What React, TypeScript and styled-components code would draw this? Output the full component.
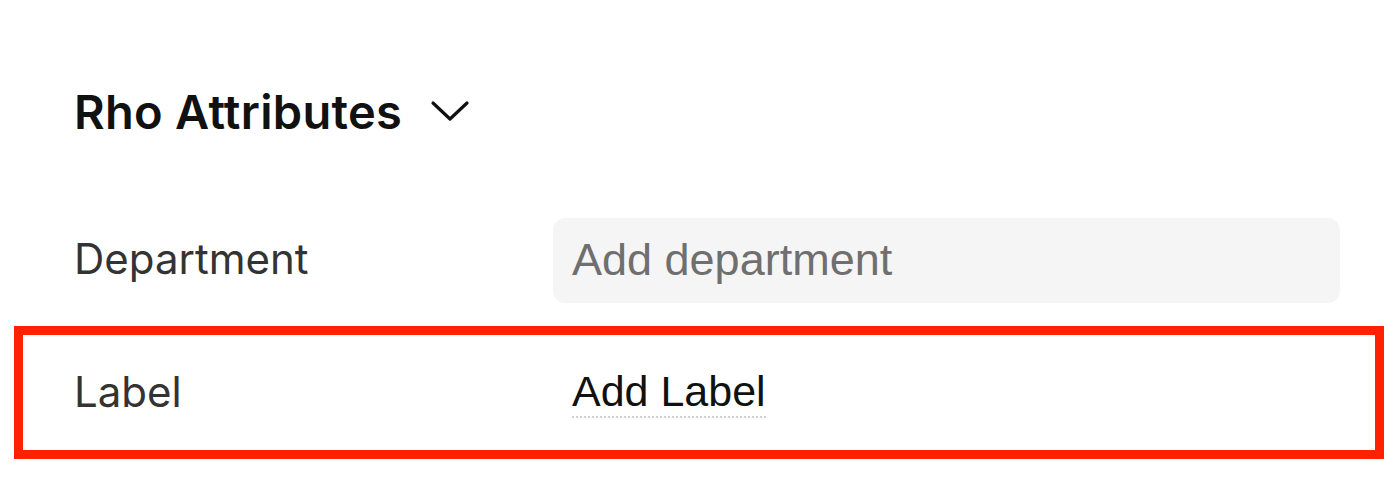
import React from "react";
import styled, { createGlobalStyle } from "styled-components";

const Global = createGlobalStyle`
  html, body { margin: 0; padding: 0; background: #ffffff; }
  body { font-family: Inter, "Noto Sans", sans-serif; color: #111; }
`;

const Page = styled.div`
  width: 1400px;
  height: 479px;
  box-sizing: border-box;
  padding: 83px 0 0 14px;
  display: flex;
  flex-direction: column;
  overflow: hidden;
`;

const Header = styled.div`
  display: flex;
  align-items: center;
  gap: 28px;
  padding-left: 60px;
  height: 56px;
  margin-bottom: 77px;
`;

const Title = styled.h2`
  margin: 0;
  font-family: Inter, sans-serif;
  font-weight: 600;
  font-size: 47px;
  letter-spacing: 0.3px;
  color: #111;
`;

const Chevron = styled.svg`
  width: 40px;
  height: 24px;
`;

const Row = styled.div<{ $highlight?: boolean }>`
  display: grid;
  grid-template-columns: 479px 787px;
  align-items: center;
  box-sizing: border-box;
  width: 1370px;
  padding-left: ${(p) => (p.$highlight ? 51 : 60)}px;
  height: ${(p) => (p.$highlight ? 133 : 88)}px;
  margin-bottom: ${(p) => (p.$highlight ? 0 : 22)}px;
  border: ${(p) => (p.$highlight ? "9px solid #ff2200" : "none")};
`;

const FieldLabel = styled.div`
  font-family: Inter, sans-serif;
  font-size: 42px;
  color: #333;
  margin-top: -3px;
`;

const Input = styled.input`
  box-sizing: border-box;
  height: 85px;
  width: 787px;
  border: none;
  border-radius: 12px;
  background: #f5f5f5;
  padding: 0 19px;
  font-family: "Liberation Sans", Arial, sans-serif;
  font-size: 45px;
  color: #111;
  outline: none;
  &::placeholder { color: #6f6f6f; }
`;

const AddButton = styled.button`
  justify-self: start;
  background: none;
  border: none;
  padding: 0 0 0 19px;
  margin-top: -3px;
  font-family: "Liberation Sans", Arial, sans-serif;
  font-size: 43px;
  color: #111;
  cursor: pointer;
`;

const Underlined = styled.span`
  border-bottom: 2px dotted #d0d0d0;
  padding-bottom: 1px;
`;

export default function App() {
  return (
    <>
      <Global />
      <Page>
        <Header>
          <Title>Rho Attributes</Title>
          <Chevron viewBox="0 0 40 24" fill="none">
            <path d="M3 4 L20 20 L37 4" stroke="#111" strokeWidth="3.2" strokeLinecap="round" strokeLinejoin="round" />
          </Chevron>
        </Header>
        <Row>
          <FieldLabel>Department</FieldLabel>
          <Input placeholder="Add department" />
        </Row>
        <Row $highlight>
          <FieldLabel>Label</FieldLabel>
          <AddButton>
            <Underlined>Add Label</Underlined>
          </AddButton>
        </Row>
      </Page>
    </>
  );
}
